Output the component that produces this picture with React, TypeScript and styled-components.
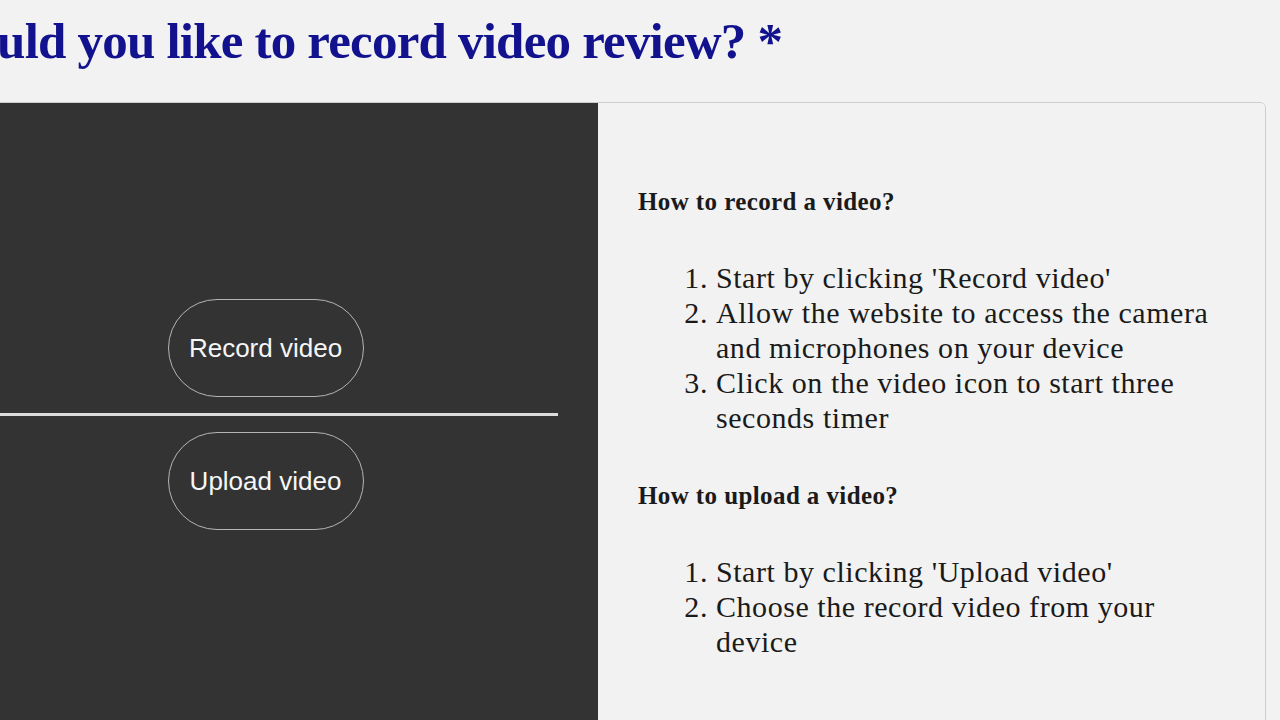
import styled, { createGlobalStyle } from "styled-components";

const GlobalStyle = createGlobalStyle`
  html, body {
    margin: 0;
    padding: 0;
    background: #f2f2f2;
    overflow: hidden;
  }
`;

const Page = styled.div`
  width: 1334px;
  margin-left: -68px;
  padding-top: 11px;
`;

const Question = styled.h1`
  margin: 0 0 31px -7px;
  font-family: "Liberation Serif", "Times New Roman", serif;
  font-weight: 700;
  font-size: 51px;
  line-height: 60px;
  color: #12128f;
  letter-spacing: -0.8px;
  white-space: nowrap;
`;

const Card = styled.div`
  display: grid;
  grid-template-columns: 665px 1fr;
  border: 1px solid #cdcdcd;
  border-radius: 6px;
  overflow: hidden;
  height: 700px;
`;

const ChoicePanel = styled.div`
  background: #333333;
  display: flex;
  flex-direction: column;
  align-items: center;
  padding: 196px 40px 0;
  gap: 16px;
`;

const PillButton = styled.button`
  width: 196px;
  height: 98px;
  border: 1.5px solid #b5b5b5;
  border-radius: 49px;
  background: transparent;
  color: #f6f6f6;
  font-family: "Liberation Sans", Arial, sans-serif;
  font-size: 26px;
  cursor: pointer;
`;

const Divider = styled.hr`
  align-self: stretch;
  margin: 0;
  border: none;
  height: 3px;
  background: #dcdcdc;
`;

const HelpPanel = styled.div`
  background: #f2f2f2;
  padding: 87px 40px 0;
  font-family: "Liberation Serif", "Times New Roman", serif;
  color: #1a1a1a;
`;

const HelpTitle = styled.h4`
  margin: 0;
  font-size: 25px;
  line-height: 24px;
  font-weight: 700;
  letter-spacing: 0.4px;
`;

const Steps = styled.ol`
  margin: 46px 0 49px;
  padding-left: 78px;
  font-size: 30px;
  line-height: 35px;
  letter-spacing: 0.55px;
`;

export default function App() {
  return (
    <>
      <GlobalStyle />
      <Page>
        <Question>Would you like to record video review? *</Question>
        <Card>
          <ChoicePanel>
            <PillButton>Record video</PillButton>
            <Divider />
            <PillButton>Upload video</PillButton>
          </ChoicePanel>
          <HelpPanel>
            <HelpTitle>How to record a video?</HelpTitle>
            <Steps>
              <li>Start by clicking 'Record video'</li>
              <li>Allow the website to access the camera and microphones on your device</li>
              <li>Click on the video icon to start three seconds timer</li>
            </Steps>
            <HelpTitle>How to upload a video?</HelpTitle>
            <Steps>
              <li>Start by clicking 'Upload video'</li>
              <li>Choose the record video from your device</li>
            </Steps>
          </HelpPanel>
        </Card>
      </Page>
    </>
  );
}
